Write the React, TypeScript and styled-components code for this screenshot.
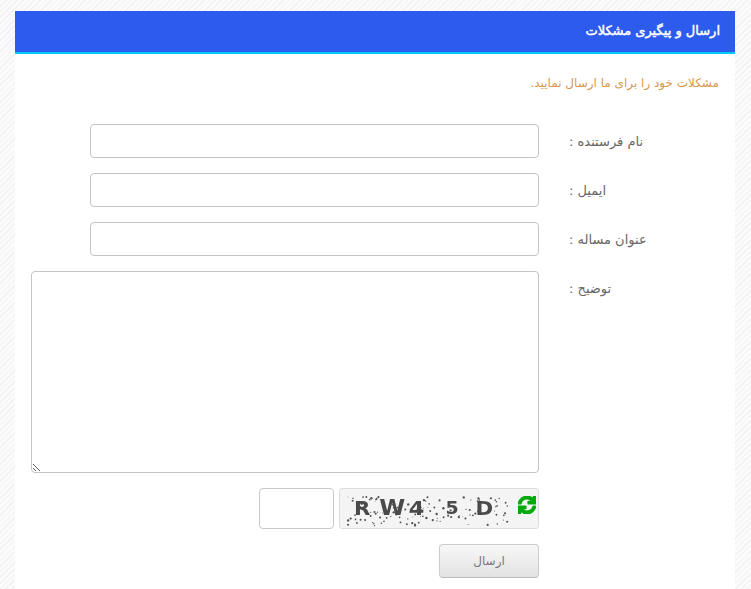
import styled, { createGlobalStyle } from "styled-components"
import { FaSync } from "react-icons/fa"

const GlobalStyle = createGlobalStyle`
	html, body {
		margin: 0;
		padding: 0;
	}

	body {
		min-height: 589px;
		font-family: "DejaVu Sans", "Noto Sans", sans-serif;
		background-color: #fafafa;
		background-image: repeating-linear-gradient(
			135deg,
			#f1f1f1 0,
			#f1f1f1 1px,
			#fbfbfb 1px,
			#fbfbfb 4px
		);
	}
`

// seeded so the captcha noise stays the same between renders
const noiseDots = Array.from({ length: 125 }, (_, i) => {
	const a = Math.sin(i * 12.9898) * 43758.5453
	const b = Math.sin(i * 78.233) * 12543.1234
	const c = Math.sin(i * 39.425) * 9631.77
	return {
		x: 8 + (a - Math.floor(a)) * 160,
		y: 8 + (b - Math.floor(b)) * 29,
		r: 0.45 + (c - Math.floor(c)) * 0.75,
	}
})

const captchaChars = [
	{ char: "R", size: 19, gap: 0 },
	{ char: "W", size: 21, gap: 8 },
	{ char: "4", size: 20, gap: 3 },
	{ char: "5", size: 17, gap: 19 },
	{ char: "D", size: 19, gap: 15 },
]

const App: React.FC = () => {
	return (
		<>
			<GlobalStyle />
			<Panel dir="rtl">
				<PanelHeader>ارسال و پیگیری مشکلات</PanelHeader>
				<PanelBody>
					<Notice>مشکلات خود را برای ما ارسال نمایید.</Notice>
					<Form>
						<Row>
							<Label>نام فرستنده :</Label>
							<TextInput type="text" />
						</Row>
						<Row>
							<Label>ایمیل :</Label>
							<TextInput type="text" />
						</Row>
						<Row>
							<Label>عنوان مساله :</Label>
							<TextInput type="text" />
						</Row>
						<Row>
							<Label>توضیح :</Label>
							<TextArea />
						</Row>
						<ActionRow>
							<Captcha>
								<CaptchaRefresh>
									<FaSync />
								</CaptchaRefresh>
								<CaptchaImage viewBox="0 0 175 41" aria-hidden="true">
									{noiseDots.map((dot, i) => (
										<circle key={i} cx={dot.x} cy={dot.y} r={dot.r} fill="#555" />
									))}
								</CaptchaImage>
								<CaptchaText dir="ltr">
									{captchaChars.map(({ char, size, gap }) => (
										<CaptchaChar key={char} $size={size} $gap={gap}>
											{char}
										</CaptchaChar>
									))}
								</CaptchaText>
							</Captcha>
							<CaptchaInput type="text" />
						</ActionRow>
						<ActionRow>
							<SubmitButton type="button">ارسال</SubmitButton>
						</ActionRow>
					</Form>
				</PanelBody>
			</Panel>
		</>
	)
}

export default App

const Panel = styled.div`
	width: 720px;
	margin: 0 16px 0 15px;
	padding-top: 11px;
	box-sizing: border-box;
`

const PanelHeader = styled.h1`
	margin: 0;
	height: 43px;
	box-sizing: border-box;
	padding: 0 15px 2px 0;
	display: flex;
	align-items: center;
	background-color: #2d5bee;
	border-bottom: 2px solid #00c8f7;
	color: #fff;
	font-size: 13px;
	font-weight: normal;
	-webkit-text-stroke: 0.45px #fff;
`

const PanelBody = styled.div`
	background-color: #fff;
	padding: 21px 16px 11px 16px;
`

const Notice = styled.p`
	margin: 0 0 32px;
	height: 17px;
	line-height: 17px;
	color: #d8974a;
	font-size: 12px;
`

const Form = styled.form`
	display: flex;
	flex-direction: column;
	gap: 15px;
`

const Row = styled.div`
	display: flex;
	align-items: flex-start;
	gap: 30px;
`

const Label = styled.label`
	flex: 0 0 150px;
	height: 34px;
	line-height: 35px;
	text-align: left;
	color: #666;
	font-size: 13px;
`

const TextInput = styled.input`
	width: 449px;
	height: 34px;
	box-sizing: border-box;
	background: #fff;
	border: 1px solid #c4c4c4;
	border-radius: 4px;
	outline: none;
`

const TextArea = styled.textarea`
	width: 508px;
	height: 202px;
	box-sizing: border-box;
	margin: 0;
	background: #fff;
	border: 1px solid #c4c4c4;
	border-radius: 4px;
	outline: none;
`

const ActionRow = styled.div`
	display: flex;
	gap: 5px;
	padding-right: 180px;
`

const Captcha = styled.div`
	position: relative;
	width: 200px;
	height: 41px;
	box-sizing: border-box;
	background: #f4f4f4;
	border: 1px solid #ddd;
	border-radius: 3px;
	overflow: hidden;
`

const CaptchaImage = styled.svg`
	position: absolute;
	top: 0;
	left: 0;
	width: 175px;
	height: 41px;
	filter: blur(0.4px);
`

const CaptchaText = styled.div`
	position: absolute;
	top: 6px;
	left: 14px;
	display: flex;
	align-items: center;
	font-family: "DejaVu Sans", sans-serif;
	font-weight: bold;
	line-height: 26px;
	color: #4a4a4a;
	transform: scaleX(1.12);
	transform-origin: left center;
	filter: blur(0.5px);
`

const CaptchaChar = styled.span<{ $size: number; $gap: number }>`
	font-size: ${({ $size }) => $size}px;
	margin-left: ${({ $gap }) => $gap}px;
`

const CaptchaRefresh = styled.span`
	position: absolute;
	top: 7px;
	right: 2px;
	display: flex;
	color: #00aa0c;
	font-size: 18px;

	svg {
		stroke: currentColor;
		stroke-width: 40px;
	}
`

const CaptchaInput = styled.input`
	width: 75px;
	height: 41px;
	box-sizing: border-box;
	background: #fff;
	border: 1px solid #c9c9c9;
	border-radius: 4px;
	outline: none;
`

const SubmitButton = styled.button`
	width: 100px;
	height: 34px;
	box-sizing: border-box;
	background: linear-gradient(to bottom, #f8f8f8, #e2e2e2);
	border: 1px solid #ccc;
	border-bottom-color: #bbb;
	border-radius: 4px;
	color: #777;
	font-family: "DejaVu Sans", sans-serif;
	font-size: 12px;
`
